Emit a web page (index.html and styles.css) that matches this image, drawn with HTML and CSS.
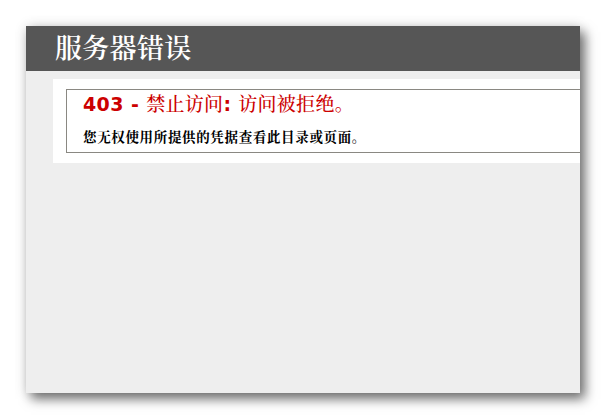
FILE: index.html
```
<!DOCTYPE html>
<html lang="zh-CN">
<head>
<meta charset="utf-8">
<title>IIS 403</title>
<link rel="stylesheet" href="styles.css">
</head>
<body>
<div class="window">
  <div class="header"><h1 class="title">服务器错误</h1></div>
  <div class="content">
    <div class="content-container">
      <fieldset class="box">
        <h2 class="err"><span class="code">403 - </span>禁止访问<span class="colon">: </span>访问被拒绝。</h2>
        <h3 class="msg">您无权使用所提供的凭据查看此目录或页面。</h3>
      </fieldset>
    </div>
  </div>
</div>
</body>
</html>
```
FILE: styles.css
```
html, body {
  margin: 0;
  padding: 0;
  background: #ffffff;
}
html {
  height: 420px;
  overflow: hidden;
}
body {
  height: 420px;
  box-sizing: border-box;
  padding: 26px 0 0 26px;
  font-family: "DejaVu Sans", "Noto Serif CJK SC", "Noto Sans CJK SC", sans-serif;
}
.window {
  width: 554px;
  height: 367px;
  background: #eeeeee;
  overflow: hidden;
  box-shadow: 5px 6px 11px rgba(0,0,0,0.55), 0 0 12px rgba(0,0,0,0.12);
}
.header {
  height: 45px;
  box-sizing: border-box;
  background: #565656;
  display: flex;
  align-items: center;
  padding: 0 0 4px 29px;
}
.title {
  margin: 0;
  color: #ffffff;
  font-family: "Noto Serif CJK SC", "Noto Sans CJK SC", serif;
  font-weight: 600;
  font-size: 27px;
  letter-spacing: 0.3px;
  line-height: 30px;
}
.content {
  margin-left: 27px;
}
.content-container {
  margin-top: 8px;
  background: #ffffff;
  width: 600px;
  padding: 10px 10px 10px 13px;
}
.box {
  margin: 0;
  padding: 1px 16px 8px 16px;
  border: 1px solid #8a8882;
  min-width: 0;
}
.err {
  margin: 0;
  color: #cc0000;
  font-size: 19px;
  letter-spacing: 0.3px;
  line-height: 23px;
  font-weight: 500;
  font-family: "Noto Serif CJK SC", "Noto Sans CJK SC", serif;
}
.code {
  font-family: "DejaVu Sans", sans-serif;
  font-weight: bold;
  letter-spacing: 0.4px;
}
.colon {
  font-family: "DejaVu Sans", sans-serif;
  font-weight: bold;
}
.msg {
  margin: 12px 0 0 0;
  color: #000000;
  font-size: 13.5px;
  letter-spacing: 0.65px;
  line-height: 16px;
  font-weight: bold;
  font-family: "Noto Serif CJK SC", "Noto Sans CJK SC", serif;
}
```
